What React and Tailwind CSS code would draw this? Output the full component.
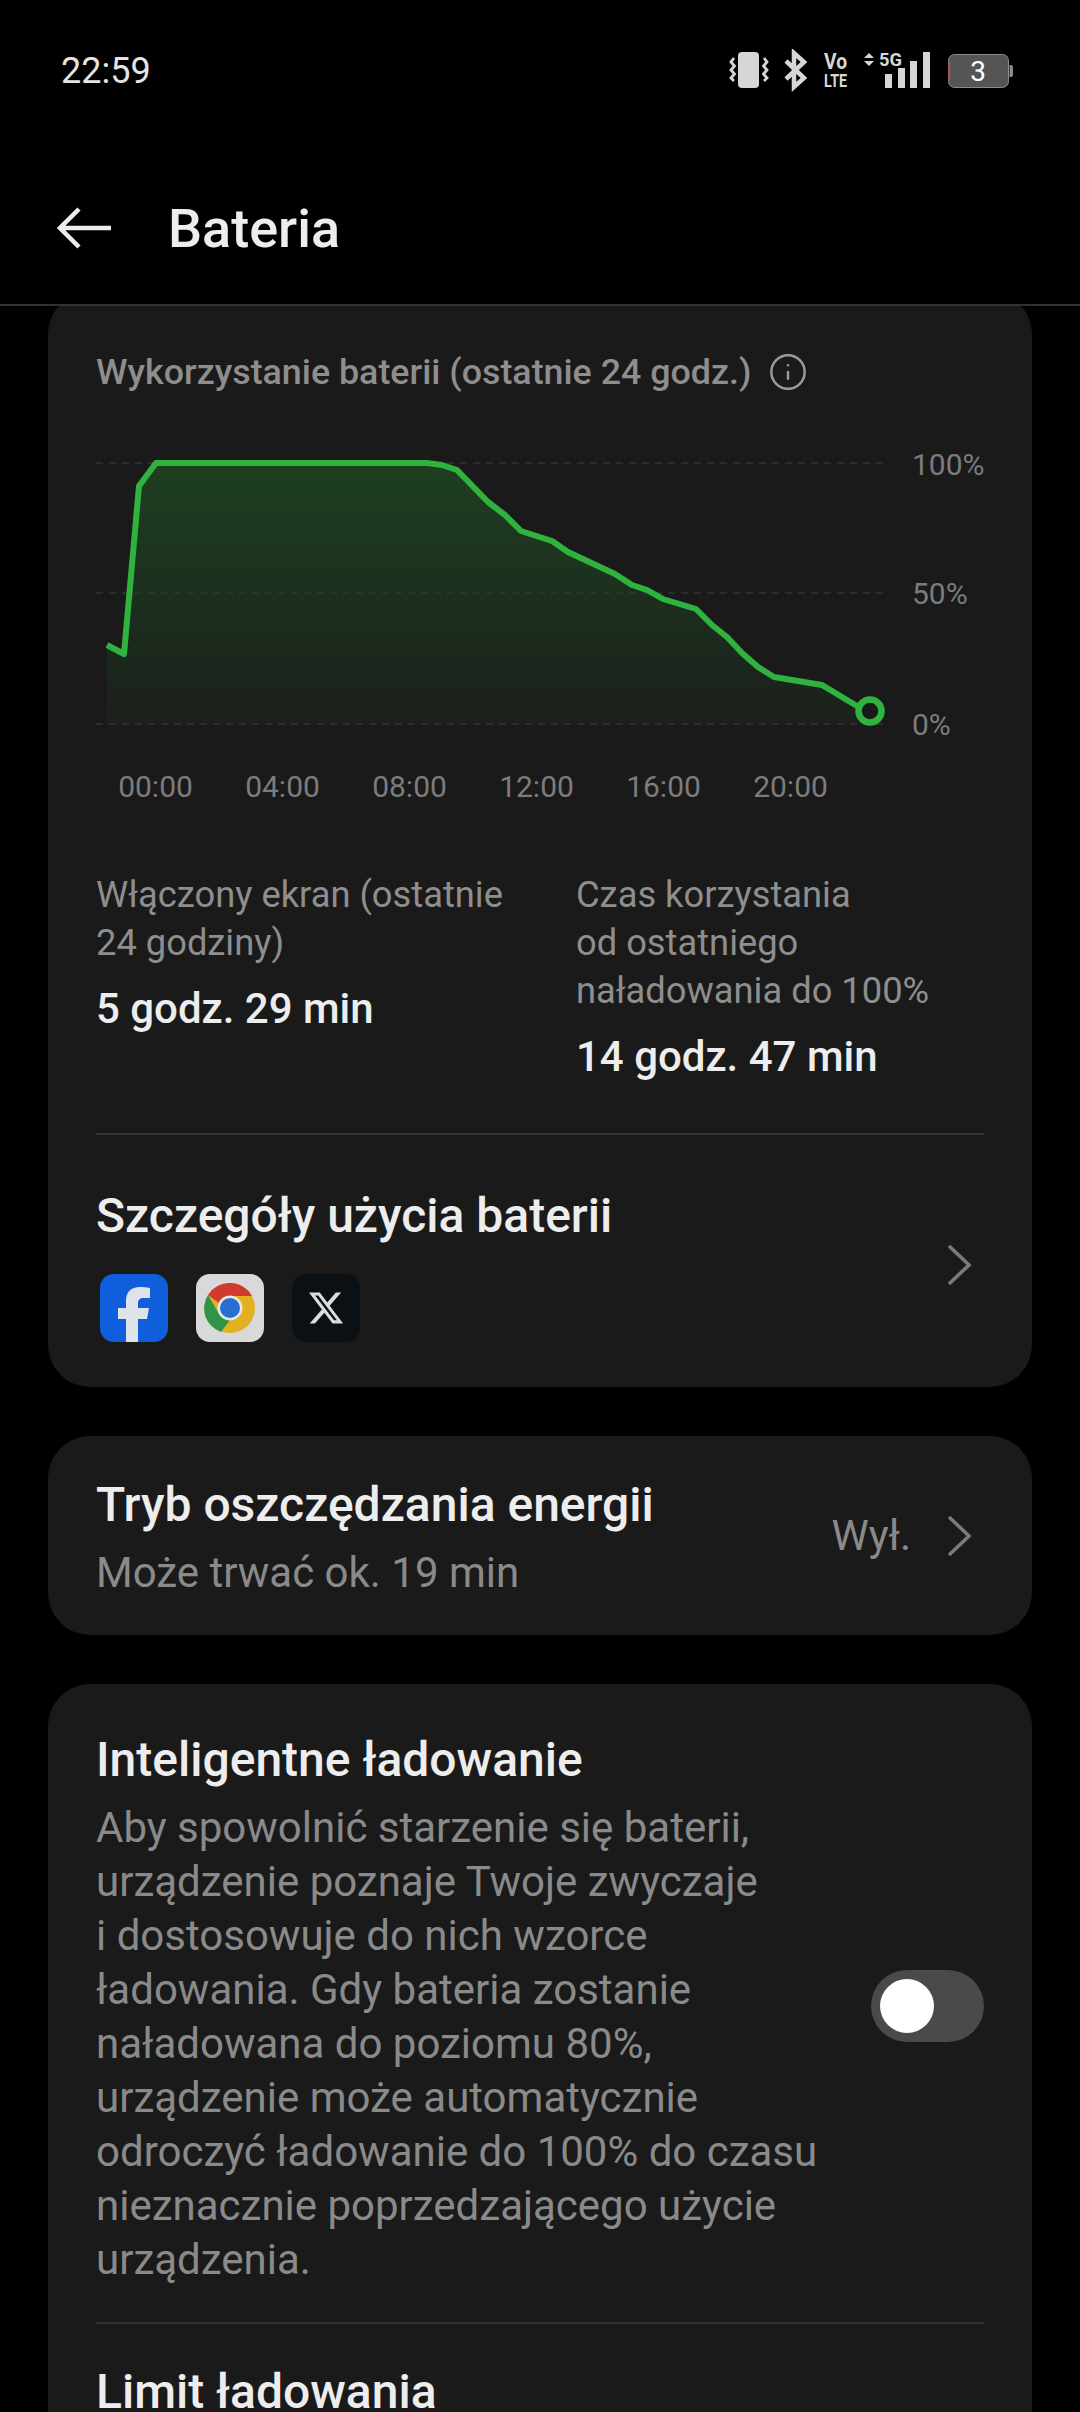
import React from "react";
import { Info } from "lucide-react";
import { FaXTwitter } from "react-icons/fa6";

const linePts =
  "107,645 124,654 139,486 156,463 427,463 442,465 457,470 488,502 505,515 521,531 552,541 568,552 615,574 632,585 647,590 663,599 696,609 712,625 727,637 742,653 758,667 774,677 822,685 857,706";

const hours = ["00:00", "04:00", "08:00", "12:00", "16:00", "20:00"];

const paragraph = [
  "Aby spowolnić starzenie się baterii,",
  "urządzenie poznaje Twoje zwyczaje",
  "i dostosowuje do nich wzorce",
  "ładowania. Gdy bateria zostanie",
  "naładowana do poziomu 80%,",
  "urządzenie może automatycznie",
  "odroczyć ładowanie do 100% do czasu",
  "nieznacznie poprzedzającego użycie",
  "urządzenia.",
];

function StatusIcons() {
  return (
    <svg width="300" height="44" viewBox="0 0 300 44" className="block">
      {/* vibrate */}
      <rect x="24" y="3" width="21" height="36" rx="4" fill="#d6d6d6" />
      <path d="M20 9 l-3 4 3.5 4 -3.5 4 3.5 4 -3.5 4 3 3" fill="none" stroke="#d6d6d6" strokeWidth="2.8" />
      <path d="M50 9 l3 4 -3.5 4 3.5 4 -3.5 4 3.5 4 -3 3" fill="none" stroke="#d6d6d6" strokeWidth="2.8" />
      {/* bluetooth */}
      <path d="M72 12 L90 29 L80 38 L80 4 L90 13 L72 30" fill="none" stroke="#d6d6d6" strokeWidth="4.5" />
      {/* volte */}
      <text x="110" y="20" fontFamily="Roboto" fontWeight="700" fontSize="22" fill="#d6d6d6" textLength="23" lengthAdjust="spacingAndGlyphs">Vo</text>
      <text x="110" y="38" fontFamily="Roboto" fontWeight="700" fontSize="19" fill="#d6d6d6" textLength="23" lengthAdjust="spacingAndGlyphs">LTE</text>
      {/* signal */}
      <path d="M150 9 l5 -5 5 5z M150 12 l5 5 5 -5z" fill="#d6d6d6" />
      <text x="165" y="17" fontFamily="Roboto" fontWeight="700" fontSize="19" fill="#d6d6d6" textLength="23" lengthAdjust="spacingAndGlyphs">5G</text>
      <rect x="171" y="25" width="7" height="14" fill="#d6d6d6" />
      <rect x="184" y="19" width="7" height="20" fill="#d6d6d6" />
      <rect x="196" y="12" width="7" height="27" fill="#d6d6d6" />
      <rect x="209" y="3" width="7" height="36" fill="#d6d6d6" />
      {/* battery */}
      <rect x="234.5" y="5.5" width="60" height="33" rx="6" fill="#555555" stroke="#8a8a8a" />
      <path d="M235 12 v20" stroke="#a8554f" strokeWidth="2" />
      <path d="M295.5 16 h1.5 a2 2 0 0 1 2 2 v8 a2 2 0 0 1 -2 2 h-1.5z" fill="#8a8a8a" />
      <text x="264" y="32" textAnchor="middle" fontFamily="Roboto" fontSize="28" fill="#ffffff">3</text>
    </svg>
  );
}

function ChromeIcon() {
  return (
    <svg viewBox="0 0 68 68" className="h-[68px] w-[68px]">
      <rect width="68" height="68" rx="14" fill="#d9d9d9" />
      <circle cx="34" cy="34" r="25" fill="#e2b021" />
      <path d="M34 9 A25 25 0 0 1 56 22 L34 22 A12 12 0 0 0 23 29 L12 21 A25 25 0 0 1 34 9Z" fill="#cf3c2e" />
      <path d="M12 21 L23 40 A12 12 0 0 0 34 46 L25 58 A25 25 0 0 1 12 21Z" fill="#2f9445" />
      <circle cx="34" cy="34" r="12.5" fill="#e6e6e6" />
      <circle cx="34" cy="34" r="10" fill="#2a6fd0" />
    </svg>
  );
}

function FacebookIcon() {
  return (
    <svg viewBox="0 0 68 68" className="h-[68px] w-[68px]">
      <rect width="68" height="68" rx="14" fill="#0f5fdc" />
      <path d="M26 68 V45 H18 V34 H26 V27 C26 18 31 13 40 13 C43 13 46 13.4 50 14 V24 H44 C39.5 24 38 26 38 29.5 V34 H49 L47 45 H38 V68Z" fill="#dfe4ea" />
    </svg>
  );
}

function Chevron({ className }) {
  return (
    <svg width="26" height="44" viewBox="0 0 26 44" className={className}>
      <path d="M3 3 L23 22 L3 41" fill="none" stroke="#7a7a7a" strokeWidth="3.6" />
    </svg>
  );
}

function BatteryChart() {
  return (
    <svg width="936" height="290" viewBox="0 430 936 290" className="-ml-[96px] block overflow-visible">
      <defs>
        <linearGradient id="fade" x1="0" y1="0" x2="0" y2="1">
          <stop offset="0" stopColor="#1e3f20" />
          <stop offset="1" stopColor="#1b201c" />
        </linearGradient>
      </defs>
      <path d={`M107,724 L${linePts} L869,711 L869,724Z`} fill="url(#fade)" />
      {[463, 593, 724].map((y) => (
        <line key={y} x1="96" x2="883" y1={y} y2={y} stroke="#343434" strokeWidth="1.5" strokeDasharray="7 6" />
      ))}
      <polyline points={linePts} fill="none" stroke="#2fb23e" strokeWidth="6" strokeLinejoin="round" />
      <circle cx="870" cy="711" r="11.5" fill="#1a1a1a" stroke="#2fb23e" strokeWidth="6.5" />
    </svg>
  );
}

export default function App() {
  return (
    <div className="h-[2412px] w-[1080px] overflow-hidden bg-black font-['Roboto',sans-serif] text-[#ededed]">
      <div className="flex h-[114px] items-start justify-between pl-[61px] pr-[67px] pt-[51px]">
        <span className="text-[36px] leading-[40px] text-[#e4e4e4]">22:59</span>
        <div className="-mr-[1px] -mt-[2px]">
          <StatusIcons />
        </div>
      </div>

      <header className="flex h-[192px] items-start border-b-2 border-[#333333] pl-[57px] pt-[85px]">
        <svg width="56" height="44" viewBox="0 0 56 44" className="mt-[7px]">
          <path d="M54 22 H4 M22 3 L3 22 L22 41" fill="none" stroke="#ececec" strokeWidth="4.5" />
        </svg>
        <h1 className="ml-[55px] text-[54px] font-medium leading-[60px]">Bateria</h1>
      </header>

      <main className="h-[2106px] overflow-hidden px-[48px]">
        <section className="-mt-[14px] rounded-[42px] bg-[#1a1a1a] px-[48px] pb-[45px] pt-[58px]">
          <div className="flex items-center">
            <h2 className="text-[35.8px] font-medium leading-[44px] text-[#8e8e8e]">
              Wykorzystanie baterii (ostatnie 24 godz.)
            </h2>
            <Info size={40} strokeWidth={1.5} className="ml-[16px] text-[#9a9a9a]" />
          </div>

          <div className="relative mt-[36px]">
            <BatteryChart />
            <div className="absolute left-[816px] top-[18px] text-[30px] leading-[34px] text-[#7c7c7c]">100%</div>
            <div className="absolute left-[816px] top-[147px] text-[30px] leading-[34px] text-[#7c7c7c]">50%</div>
            <div className="absolute left-[816px] top-[278px] text-[30px] leading-[34px] text-[#7c7c7c]">0%</div>
          </div>

          <div className="-ml-[4px] mt-[50px] flex text-[30px] leading-[34px] text-[#7c7c7c]">
            {hours.map((h) => (
              <span key={h} className="w-[127px] text-center">{h}</span>
            ))}
          </div>

          <div className="mt-[67px] flex">
            <div className="w-[480px]">
              <p className="text-[36.3px] leading-[48px] text-[#8e8e8e]">
                Włączony ekran (ostatnie
                <br />
                24 godziny)
              </p>
              <p className="mt-[18px] text-[42px] font-medium leading-[48px]">5 godz. 29 min</p>
            </div>
            <div>
              <p className="text-[36.3px] leading-[48px] text-[#8e8e8e]">
                Czas korzystania
                <br />
                od ostatniego
                <br />
                naładowania do 100%
              </p>
              <p className="mt-[18px] text-[42px] font-medium leading-[48px]">14 godz. 47 min</p>
            </div>
          </div>

          <div className="mt-[52px] border-t-2 border-[#333333]" />

          <div className="mt-[53px] flex items-center justify-between">
            <div>
              <h3 className="text-[48px] font-medium leading-[56px]">Szczegóły użycia baterii</h3>
              <div className="ml-[4px] mt-[30px] flex gap-[28px]">
                <FacebookIcon />
                <ChromeIcon />
                <div className="flex h-[68px] w-[68px] items-center justify-center rounded-[14px] bg-[#0b1014]">
                  <FaXTwitter size={38} className="text-[#dcdcdc]" />
                </div>
              </div>
            </div>
            <Chevron className="mr-[12px]" />
          </div>
        </section>

        <section className="mt-[49px] flex h-[199px] items-center justify-between rounded-[42px] bg-[#1a1a1a] px-[48px]">
          <div className="pt-[6px]">
            <h3 className="text-[48px] font-medium leading-[56px]">Tryb oszczędzania energii</h3>
            <p className="mt-[13px] text-[42px] leading-[54px] text-[#8a8a8a]">Może trwać ok. 19 min</p>
          </div>
          <div className="flex items-center">
            <span className="text-[42px] text-[#8a8a8a]">Wył.</span>
            <Chevron className="ml-[35px] mr-[12px]" />
          </div>
        </section>

        <section className="mt-[49px] rounded-[42px] bg-[#1a1a1a] px-[48px] pb-[60px] pt-[49px]">
          <div className="flex items-center justify-between">
            <div>
              <h3 className="text-[48px] font-medium leading-[54px]">Inteligentne ładowanie</h3>
              <div className="mt-[14px] text-[42px] leading-[54px] text-[#8a8a8a]">
                {paragraph.map((line) => (
                  <div key={line}>{line}</div>
                ))}
              </div>
            </div>
            <div className="-mt-[8px] flex h-[72px] w-[113px] items-center rounded-full bg-[#4a4a4a] pl-[9px]">
              <div className="h-[54px] w-[54px] rounded-full bg-white" />
            </div>
          </div>
          <div className="mt-[35px] border-t-2 border-[#333333]" />
          <h3 className="mt-[40px] text-[48px] font-medium leading-[56px]">Limit ładowania</h3>
        </section>
      </main>
    </div>
  );
}
